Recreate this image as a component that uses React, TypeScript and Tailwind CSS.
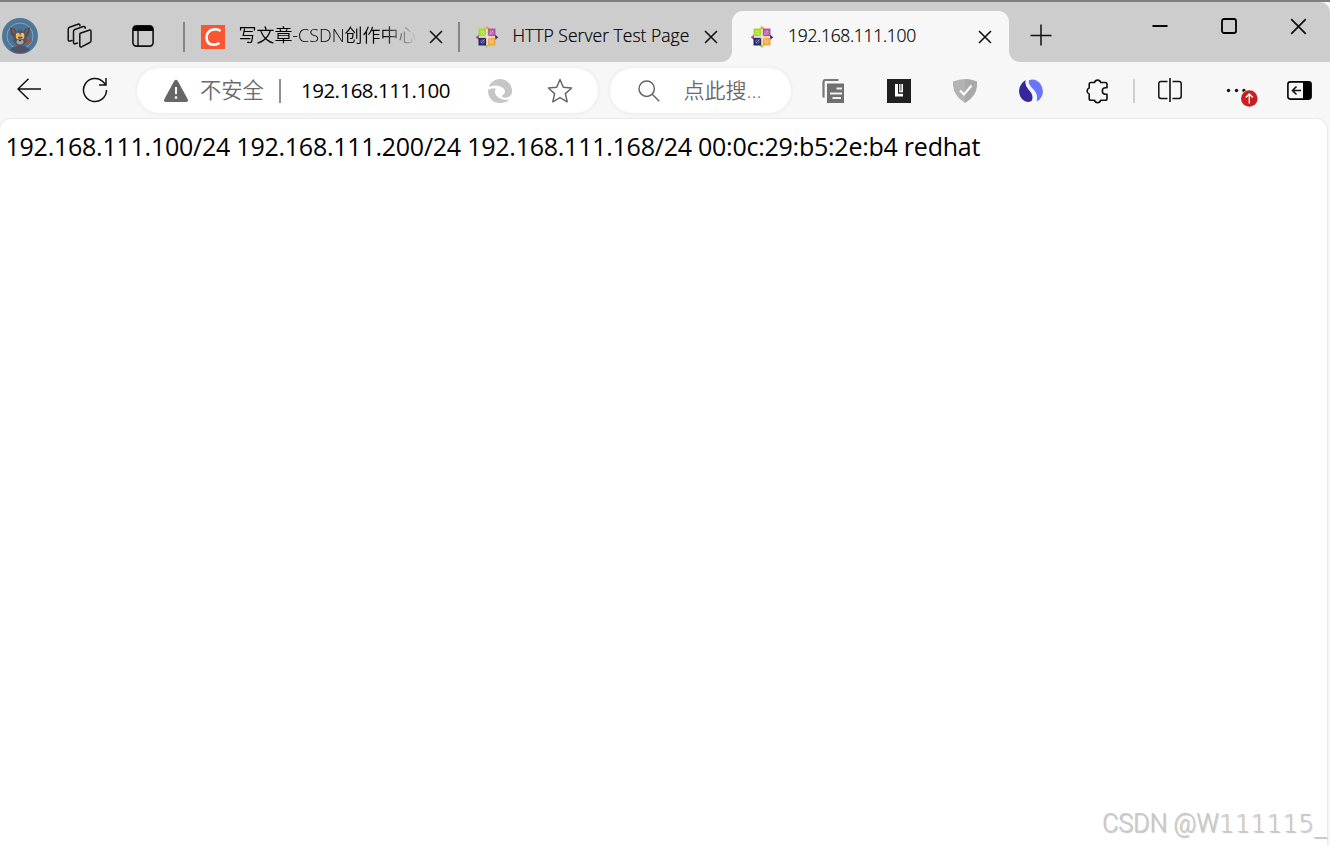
import React from "react";
import clsx from "clsx";

const CentosIcon = () => (
  <svg width="24" height="24" viewBox="0 0 24 24" className="shrink-0">
    <path d="M12 .8l2.800 3.200H9.200z" fill="#f2a63c" />
    <path d="M12 23.200l2.800-3.200H9.200z" fill="#a6dc2c" />
    <path d="M.8 12.300L4 9.500v5.600z" fill="#a2438f" />
    <path d="M23.200 12.300L20 9.500v5.600z" fill="#2b2875" />
    <path d="M12 3.500l8.500 8.500-8.500 8.500L3.500 12z" fill="#f2e9dc" />
    <rect x="3.500" y="3.500" width="7.700" height="7.700" fill="#a3db2b" />
    <rect x="12.800" y="3.500" width="7.700" height="7.700" fill="#b0579f" />
    <rect x="3.500" y="12.800" width="7.700" height="7.700" fill="#2a2670" />
    <rect x="12.800" y="12.800" width="7.700" height="7.700" fill="#f3a83b" />
    <path
      d="M6 6h3v3H6zM15 6h3v3h-3zM6 15h3v3H6zM15 15h3v3h-3zM6 6l5 5M18 6l-5 5M6 18l5-5M18 18l-5-5"
      stroke="#fff"
      strokeWidth="0.6"
      fill="none"
      opacity="0.5"
    />
  </svg>
);

const CloseIcon = (props: { size: number; weight?: number }) => (
  <svg width={props.size} height={props.size} viewBox="0 0 14 14" className="shrink-0">
    <path d="M1 1l12 12M13 1L1 13" stroke="#111" strokeWidth={props.weight ?? 1.6} fill="none" />
  </svg>
);

const Avatar = () => (
  <svg width="36" height="36" viewBox="0 0 36 36" className="shrink-0">
    <circle cx="18" cy="18" r="18" fill="#4d7699" />
    <circle cx="18" cy="18" r="13" fill="#4a7496" stroke="#7fa5be" strokeWidth="1" />
    <path d="M8 9.500q5 0 7 5l-1 5q-6 0-6-10z" fill="#574c52" />
    <path d="M28 9.500q-5 0-7 5l1 5q6 0 6-10z" fill="#574c52" />
    <path d="M10 12q2.500 1 3 4M26 12q-2.500 1-3 4" stroke="#85605f" strokeWidth="1.5" fill="none" />
    <path d="M17 10l1 4 2-3v4h-4z" fill="#474650" />
    <path d="M12 17q1-4 6-4t6 4l1 6q-3 5-7 5t-7-5z" fill="#55545f" />
    <ellipse cx="15.800" cy="18" rx="2" ry="3.300" fill="#e9bf62" />
    <ellipse cx="20.300" cy="18" rx="2" ry="3.300" fill="#e9bf62" />
    <circle cx="16.800" cy="19.500" r="0.8" fill="#222" />
    <circle cx="19.500" cy="19.500" r="0.8" fill="#222" />
    <ellipse cx="18" cy="24" rx="3.500" ry="2.400" fill="#a5a4ae" />
    <path d="M16.500 22h3l-1.500 1.600z" fill="#27262d" />
    <path d="M23.500 22.500l5-2 1.500 3-5 2.500z" fill="#a9502f" />
    <path d="M11 29.500q7-4 14 0l3 2q-4 3.500-10 3.500T8 31.500z" fill="#505365" />
  </svg>
);

const Tab = (props: {
  title: string;
  icon: React.ReactNode;
  titleClassName: string;
  className?: string;
}) => (
  <div className={clsx("flex shrink-0 items-center", props.className)}>
    {props.icon}
    <div className={clsx("overflow-hidden whitespace-nowrap text-black", props.titleClassName)}>
      {props.title}
    </div>
    <CloseIcon size={14} />
  </div>
);

const TabDivider = () => <div className="h-[30px] w-[1.500px] shrink-0 bg-[#858585]" />;

const TabStrip = () => (
  <div className="flex h-[60px] bg-[#f7f7f7]">
    <div className="flex w-[732px] shrink-0 items-center rounded-br-[11px] bg-[#cdcdcd] pt-[9px] pl-[2px]">
      <div className="pb-[1px]">
        <Avatar />
      </div>
      <svg
        width="26"
        height="26"
        viewBox="0 0 26 26"
        className="mb-[1px] ml-[29px] shrink-0"
        fill="none"
        stroke="#111"
        strokeWidth="1.5"
        strokeLinejoin="round"
        strokeLinecap="round"
      >
        <path d="M13.300 10.200l8.700-3q2-.6 2 1.300v9.300q0 1.300-1.200 1.700l-7.800 4.200q-2.200 1-2.200-1.100v-10.700q0-1.300.5-1.700z" />
        <path d="M10.500 20l-2.200.7q-1.800.5-1.800-1.300v-11q0-1.400 1.300-1.900l8.500-3q1.300-.4 1.900.8v1" />
        <path d="M5 17.500l-2 .5q-1.800.3-1.800-1.300V6q0-1.300 1.300-1.800l8.500-3q1.200-.4 1.900.8v.7" />
      </svg>
      <svg width="22" height="22" viewBox="0 0 22 22" className="mb-[1px] ml-[39px] shrink-0">
        <rect x="0.900" y="0.900" width="20.200" height="20.200" rx="3.500" fill="none" stroke="#111" strokeWidth="1.600" />
        <path d="M1 6V4.500Q1 1 4.500 1h13Q21 1 21 4.500V6z" fill="#000" />
        <path d="M6 6v15" stroke="#111" strokeWidth="1.400" />
      </svg>
      <div className="ml-[29px]">
        <TabDivider />
      </div>
      <Tab
        title="写文章-CSDN创作中心"
        className="ml-[16px] w-[242px]"
        titleClassName="ml-[14px] mr-[12px] w-[178px] shrink-0 pb-[3px] text-[18px] leading-6 tracking-[-0.05px] font-[350] [mask-image:linear-gradient(to_right,#000_80%,transparent)] font-['Open_Sans','Noto_Sans_CJK_SC',sans-serif]"
        icon={
          <svg width="24" height="24" viewBox="0 0 24 24" className="shrink-0">
            <path d="M0 0h24v24H0z" fill="#fc5531" />
            <path
              d="M19.500 6Q17 4 13.500 4.300 6 5 5.500 12q0 7.500 7 7.700 3.500 0 6-1.700"
              fill="none"
              stroke="#fff"
              strokeWidth="2.700"
            />
          </svg>
        }
      />
      <div className="ml-[15.500px]">
        <TabDivider />
      </div>
      <Tab
        title="HTTP Server Test Page"
        className="ml-[15px]"
        titleClassName="ml-[14px] mr-[13px] w-[178px] shrink-0 pb-[3px] text-[17.500px] leading-6 tracking-[0.03px] font-[350] [-webkit-text-stroke:0.2px_#000] font-['Open_Sans',sans-serif]"
        icon={<CentosIcon />}
      />
    </div>
    <div className="w-[277px] shrink-0 bg-[#cdcdcd] pt-[9px]">
      <Tab
        title="192.168.111.100"
        className="h-[51px] rounded-t-[11px] bg-[#f7f7f7] pl-[18px]"
        titleClassName="ml-[14px] mr-[14px] w-[176px] pb-[3px] text-[17.500px] leading-6 tracking-[-0.3px] font-[350] [-webkit-text-stroke:0.2px_#000] font-['Open_Sans',sans-serif]"
        icon={<CentosIcon />}
      />
    </div>
    <div className="flex flex-1 items-start rounded-bl-[11px] rounded-tr-[10px] bg-[#cdcdcd]">
      <svg width="22" height="22" viewBox="0 0 22 22" className="mt-[22px] ml-[21px]">
        <path d="M11 .5v21M.5 11.500h21" stroke="#111" strokeWidth="1.500" />
      </svg>
      <svg width="16" height="16" viewBox="0 0 16 16" className="mt-[16px] ml-[100px]">
        <path d="M0.500 8h15" stroke="#000" strokeWidth="2" />
      </svg>
      <svg width="16" height="16" viewBox="0 0 16 16" className="mt-[16px] ml-[53px]">
        <rect x="1" y="1" width="14" height="14" rx="2" fill="none" stroke="#000" strokeWidth="1.800" />
      </svg>
      <div className="mt-[16px] ml-[53px]">
        <CloseIcon size={17} weight={1.5} />
      </div>
    </div>
  </div>
);

const AddressBar = () => (
  <div className="ml-[29px] flex h-[45px] w-[461px] shrink-0 items-center rounded-full bg-white pl-[27px] shadow-[0_0_5px_rgba(0,0,0,0.07)]">
    <svg width="24" height="24" viewBox="0 0 24 24" className="shrink-0">
      <path d="M10.200 2q1.800-2.400 3.600 0l9.800 18q1.200 3-1.800 3H2.200q-3 0-1.800-3z" fill="#666" />
      <path d="M12 8v7" stroke="#fff" strokeWidth="2" />
      <circle cx="12" cy="18.500" r="1.300" fill="#fff" />
    </svg>
    <div className="ml-[12px] w-[64px] shrink-0 pb-[3px] text-[21.300px] leading-8 font-[350] whitespace-nowrap text-[#6a6a6a] font-['Noto_Sans_CJK_SC',sans-serif]">
      不安全
    </div>
    <div className="ml-[15px] h-[24px] w-[2px] shrink-0 bg-[#8e8e8e]" />
    <div className="ml-[20px] w-[187px] shrink-0 pb-[2px] text-[20.500px] leading-8 tracking-[-0.52px] text-black font-['Open_Sans',sans-serif]">
      192.168.111.100
    </div>
    <svg width="24" height="24" viewBox="0 0 24 24" className="shrink-0" fill="#c6c6c6">
      <path d="M1 7.500Q3.500 1 11 0q8 0 11.500 6 2.500 5 1 9-2.500 4.500-7.500 3.500-4.500-1 0-3.500 2.500-3-1-6-5.500-4-13-1.500z" />
      <path d="M0 11q4-2.500 8-1.200-2.500 3 .5 7 4.500 5.200 13 3.700-4 4-10.500 3.500Q3 23 .8 16.500 0 13.500 0 11z" />
    </svg>
    <svg width="26" height="26" viewBox="0 0 26 26" className="ml-[35px] shrink-0">
      <path
        d="M13 1.500l3.300 7.700 8.300.800-6.200 5.600 1.800 8.200L13 19.600l-7.200 4.200 1.800-8.200L1.400 10l8.300-.8z"
        fill="none"
        stroke="#666"
        strokeWidth="1.500"
        strokeLinejoin="round"
      />
    </svg>
  </div>
);

const SearchBox = () => (
  <div className="ml-[12px] flex h-[45px] w-[181px] shrink-0 items-center rounded-full bg-white pl-[28px] shadow-[0_0_5px_rgba(0,0,0,0.07)]">
    <svg width="22" height="22" viewBox="0 0 22 22" className="shrink-0">
      <circle cx="8.700" cy="8.700" r="7.700" fill="none" stroke="#666" strokeWidth="1.500" />
      <path d="M14.200 14.200l7 7" stroke="#666" strokeWidth="1.500" />
    </svg>
    <div className="ml-[23.500px] pb-[3px] text-[21px] leading-8 font-[350] whitespace-nowrap text-[#6a6a6a] font-['Noto_Sans_CJK_SC',sans-serif]">
      点此搜<span className="font-['Open_Sans',sans-serif]">...</span>
    </div>
  </div>
);

const Extensions = () => (
  <>
    <svg width="24" height="24" viewBox="0 0 24 24" className="ml-[31px] shrink-0">
      <path d="M1.500 18.500V3q0-2 2-2h13" fill="none" stroke="#777" strokeWidth="2.200" />
      <path d="M5 4.500h17V24H5z" fill="#707070" />
      <path d="M14.500 9.500H20M8 14.500h12M10.500 19H19" stroke="#f0f0f0" strokeWidth="1.800" />
    </svg>
    <svg width="24" height="24" viewBox="0 0 24 24" className="ml-[41px] shrink-0">
      <path d="M0 0h24v24H0z" fill="#202020" />
      <path d="M8 5h3v9.800h5V17.500H8z" fill="#fff" />
      <path d="M12.200 5h1.300v6.800h.9V5H16v8.300h-3.800z" fill="#fff" />
    </svg>
    <svg width="24" height="24" viewBox="0 0 24 24" className="ml-[42px] shrink-0">
      <path d="M12 0q6 0 12 2.500 1 14-12 21.500-13-7.500-12-21.500Q6 0 12 0z" fill="#b3b3b3" />
      <path d="M12 0q6 0 12 2.500 1 14-12 21.500z" fill="#a9a9a9" />
      <path d="M7 11.500l4 4L18.500 6.500" fill="none" stroke="#fff" strokeWidth="2" />
    </svg>
    <svg width="24" height="24" viewBox="0 0 24 24" className="ml-[42px] shrink-0">
      <path d="M6.800 1Q5 5.500 9.500 10.500q6 6.500 3 11.500-5 2.500-9-1.500Q-1.500 15 .8 8 3 3 6.800 1z" fill="#35269a" />
      <path d="M10 1.200q6-2.500 11 3 5 7 1.500 13.800-1.500 3-5 4.500 2-7-3-12Q8.500 5 10 1.200z" fill="#6b75fa" />
    </svg>
    <svg width="24" height="26" viewBox="0 0 24 26" className="ml-[42px] shrink-0">
      <path
        d="M6 4.500h3.500a3.200 3.200 0 0 1 6.200 0h4.500q1.800 0 1.800 1.800v3.500h-1.500a3.200 3.200 0 0 0 0 6.400H22v4.300q0 1.800-1.800 1.800h-4.500a3.200 3.200 0 0 1-6.200 0H6q-1.800 0-1.800-1.800v-4.500a3.200 3.200 0 0 1 0-6V6.300Q4.200 4.500 6 4.500z"
        fill="none"
        stroke="#111"
        strokeWidth="1.600"
        strokeLinejoin="round"
      />
    </svg>
  </>
);

const Toolbar = () => (
  <div className="flex h-[57px] items-center bg-[#f7f7f7] pl-[17px]">
    <svg width="24" height="22" viewBox="0 0 24 22" className="mb-[3px] shrink-0">
      <path d="M24 11H1M11.500.7L1 11l10.500 10.300" fill="none" stroke="#111" strokeWidth="1.500" />
    </svg>
    <svg width="26" height="26" viewBox="0 0 26 26" className="mb-[1px] ml-[41px] shrink-0">
      <path
        d="M24.500 13A11.500 11.500 0 1 1 21.500 5.300L24 8M24 1v7h-7"
        fill="none"
        stroke="#111"
        strokeWidth="1.500"
      />
    </svg>
    <AddressBar />
    <SearchBox />
    <Extensions />
    <div className="ml-[24px] h-[24px] w-[2px] shrink-0 bg-[#cfcfcf]" />
    <svg width="24" height="24" viewBox="0 0 24 24" className="mb-[1px] ml-[23px] shrink-0" fill="none" stroke="#111">
      <path d="M12 0v24" strokeWidth="1.600" />
      <path
        d="M9.500 3.500H3Q.8 3.500.8 5.700v12.600q0 2.200 2.200 2.200h6.500M14.500 3.500H21q2.200 0 2.200 2.200v12.600q0 2.200-2.200 2.200h-6.500"
        strokeWidth="1.500"
      />
    </svg>
    <svg width="34" height="34" viewBox="0 0 34 34" className="ml-[43px] shrink-0">
      <circle cx="3.500" cy="16.500" r="1.700" fill="#111" />
      <circle cx="11.500" cy="16.500" r="1.700" fill="#111" />
      <circle cx="19" cy="16.500" r="1.700" fill="#111" />
      <circle cx="24.300" cy="24.500" r="9" fill="#f7f7f7" />
      <circle cx="24.300" cy="24.500" r="8.300" fill="#c7201f" />
      <path d="M24.300 29.500v-9M20.800 23.500l3.500-3.500 3.500 3.500" fill="none" stroke="#fff" strokeWidth="1.400" />
    </svg>
    <svg width="25" height="19" viewBox="0 0 25 19" className="mb-[1px] ml-[28px] shrink-0">
      <rect x="0.900" y="0.900" width="23.200" height="17.200" rx="2.500" fill="none" stroke="#000" strokeWidth="1.600" />
      <path d="M16 1h6q2 0 2 2v13q0 2-2 2h-6z" fill="#000" />
      <path d="M14 9.500H6M9.500 5.500l-4 4 4 4" fill="none" stroke="#111" strokeWidth="1.600" />
    </svg>
  </div>
);

const App = () => {
  return (
    <div className="relative h-[846px] w-[1330px] overflow-hidden bg-[#f7f7f7]">
      <div className="bg-[#7f7f7f] pt-[2px]">
        <TabStrip />
      </div>
      <Toolbar />
      <div className="h-[727px] w-[1327px] rounded-t-[10px] bg-white pt-[9px] pl-[5.500px] shadow-[0_0_2px_rgba(0,0,0,0.18)]">
        <p className="text-[25px] leading-[36px] tracking-[-0.245px] whitespace-nowrap text-black font-['Open_Sans',sans-serif]">
          192.168.111.100/24 192.168.111.200/24 192.168.111.168/24 00:0c:29:b5:2e:b4 redhat
        </p>
      </div>
      <div className="absolute top-[808px] left-[1102px] text-[25px] leading-8 font-light whitespace-nowrap text-[#c8c8c8] [text-shadow:1px_1px_1px_rgba(0,0,0,0.25)] font-['Roboto',sans-serif]">
        CSDN @W<span className="font-extralight font-['DejaVu_Sans',sans-serif]">111115_</span>
      </div>
    </div>
  );
};

export default App;
